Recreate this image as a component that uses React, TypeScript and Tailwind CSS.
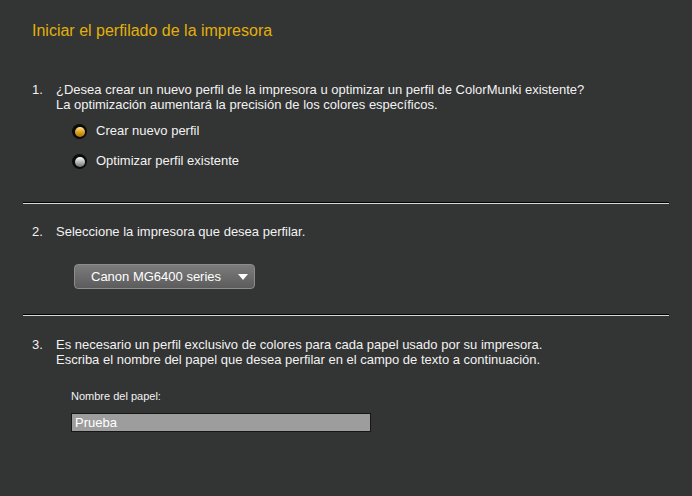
import React from "react";

const Radio: React.FC<{ on?: boolean }> = ({ on }) => (
  <svg width="15" height="15" viewBox="0 0 15 15" className="shrink-0">
    <defs>
      <linearGradient id={on ? "gOn" : "gOff"} x1="0" y1="0" x2="0" y2="1">
        {on ? (
          <>
            <stop offset="0" stopColor="#fbe7a0" />
            <stop offset="0.5" stopColor="#e2a21c" />
            <stop offset="1" stopColor="#a87010" />
          </>
        ) : (
          <>
            <stop offset="0" stopColor="#ffffff" />
            <stop offset="0.5" stopColor="#b8b8b8" />
            <stop offset="1" stopColor="#707070" />
          </>
        )}
      </linearGradient>
    </defs>
    <circle cx="7.5" cy="7.5" r="7.5" fill="#0b0b0b" />
    <circle cx="8" cy="8" r="5" fill={`url(#${on ? "gOn" : "gOff"})`} />
  </svg>
);

const Divider: React.FC<{ className?: string }> = ({ className }) => (
  <div className={`mx-[23px] border-t border-t-black border-b border-b-[#d8d8d8] ${className ?? ""}`} />
);

export default function App() {
  return (
    <div className="w-[692px] h-[496px] overflow-hidden bg-[#333434] font-['Liberation_Sans',Arial,sans-serif] text-[#f2f2f2]">
      <h1 className="pl-[32px] pt-[21px] text-[16px] leading-[20px] text-[#e2b00a]">
        Iniciar el perfilado de la impresora
      </h1>

      {/* Step 1 */}
      <div className="mt-[41px] flex pl-[32px] text-[13px] leading-[15px]">
        <span className="w-[24px]">1.</span>
        <div>
          ¿Desea crear un nuevo perfil de la impresora u optimizar un perfil de ColorMunki existente?
          <br />
          La optimización aumentará la precisión de los colores específicos.
        </div>
      </div>
      <div className="mt-[9px] flex flex-col gap-[10px] pl-[72px] text-[13px]">
        <div className="flex h-[20px] items-center gap-[9px]">
          <Radio on />
          <span>Crear nuevo perfil</span>
        </div>
        <div className="flex h-[20px] items-center gap-[9px]">
          <Radio />
          <span>Optimizar perfil existente</span>
        </div>
      </div>

      <Divider className="mt-[31px]" />

      {/* Step 2 */}
      <div className="mt-[20px] flex pl-[32px] text-[13px] leading-[15px]">
        <span className="w-[24px]">2.</span>
        <div>Seleccione la impresora que desea perfilar.</div>
      </div>
      <div className="mt-[25px] pl-[74px]">
        <div className="flex h-[25px] w-[181px] items-center justify-between rounded-[4px] border border-[#8c8c8c] bg-gradient-to-b from-[#7c7c7c] to-[#5c5c5c] pl-[16px] pr-[6px] text-[13px] text-white">
          <span>Canon MG6400 series</span>
          <svg width="10" height="6" viewBox="0 0 10 6">
            <path d="M0 0H10L5 6Z" fill="#ffffff" />
          </svg>
        </div>
      </div>

      <Divider className="mt-[25px]" />

      {/* Step 3 */}
      <div className="mt-[21px] flex pl-[32px] text-[13px] leading-[15px]">
        <span className="w-[24px]">3.</span>
        <div>
          Es necesario un perfil exclusivo de colores para cada papel usado por su impresora.
          <br />
          Escriba el nombre del papel que desea perfilar en el campo de texto a continuación.
        </div>
      </div>
      <div className="mt-[22px] pl-[71px] text-[11px] leading-[14px]">Nombre del papel:</div>
      <div className="mt-[10px] pl-[71px]">
        <div className="flex h-[19px] w-[300px] items-center border border-[#161616] bg-[#9d9d9d] pl-[3px] text-[13px] text-white">
          Prueba
        </div>
      </div>
    </div>
  );
}
